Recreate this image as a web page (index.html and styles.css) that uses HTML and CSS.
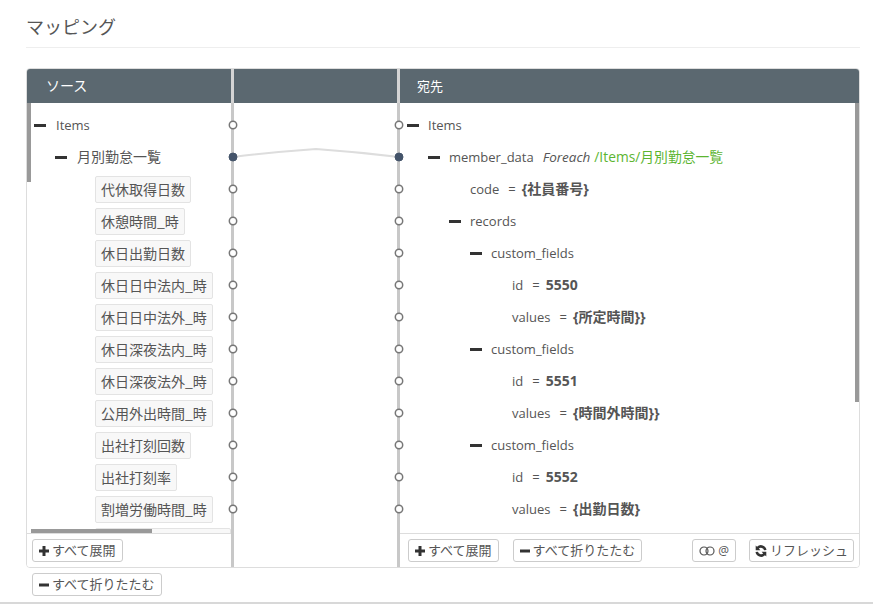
FILE: index.html
```html
<!DOCTYPE html>
<html lang="ja">
<head>
<meta charset="utf-8">
<title>マッピング</title>
<link rel="stylesheet" href="styles.css">
</head>
<body>
<main class="page">
  <h1 class="title">マッピング</h1>
  <section class="panel">
    <div class="panel-head">
      <div class="head-source">ソース</div>
      <div class="head-mid"></div>
      <div class="head-target">宛先</div>
    </div>
    <div class="panel-body">
      <div class="pane pane-source">
        <div class="tree tree-source">
          <div class="row"><i class="toggle"></i><span>Items</span></div>
          <div class="row l1"><i class="toggle"></i><span class="jp">月別勤怠一覧</span></div>
          <div class="row chip-row"><span class="chip">代休取得日数</span></div>
          <div class="row chip-row"><span class="chip">休憩時間_時</span></div>
          <div class="row chip-row"><span class="chip">休日出勤日数</span></div>
          <div class="row chip-row"><span class="chip">休日日中法内_時</span></div>
          <div class="row chip-row"><span class="chip">休日日中法外_時</span></div>
          <div class="row chip-row"><span class="chip">休日深夜法内_時</span></div>
          <div class="row chip-row"><span class="chip">休日深夜法外_時</span></div>
          <div class="row chip-row"><span class="chip">公用外出時間_時</span></div>
          <div class="row chip-row"><span class="chip">出社打刻回数</span></div>
          <div class="row chip-row"><span class="chip">出社打刻率</span></div>
          <div class="row chip-row"><span class="chip">割増労働時間_時</span></div>
          <div class="row chip-row"><span class="chip chip-cut"></span></div>
          <div class="thumb thumb-v-source"></div>
          <div class="thumb thumb-h-source"></div>
        </div>
        <div class="pane-foot">
          <button class="btn"><svg class="ico" viewBox="0 0 12 12"><path d="M4.500 1h3v3.500h3.500v3h-3.500v3.500h-3v-3.500h-3.500v-3h3.500z"/></svg>すべて展開</button>
        </div>
      </div>
      <svg class="wires" viewBox="0 0 169 464">
        <path class="wire" d="M2 54 Q43 49 85 46 Q127 49 168 54"/>
        <g class="dots">
          <circle cx="2" cy="22" r="3.700"/><circle cx="2" cy="86" r="3.700"/><circle cx="2" cy="118" r="3.700"/><circle cx="2" cy="150" r="3.700"/><circle cx="2" cy="182" r="3.700"/><circle cx="2" cy="214" r="3.700"/><circle cx="2" cy="246" r="3.700"/><circle cx="2" cy="278" r="3.700"/><circle cx="2" cy="310" r="3.700"/><circle cx="2" cy="342" r="3.700"/><circle cx="2" cy="374" r="3.700"/><circle cx="2" cy="406" r="3.700"/>
          <circle cx="168" cy="22" r="3.700"/><circle cx="168" cy="86" r="3.700"/><circle cx="168" cy="118" r="3.700"/><circle cx="168" cy="150" r="3.700"/><circle cx="168" cy="182" r="3.700"/><circle cx="168" cy="214" r="3.700"/><circle cx="168" cy="246" r="3.700"/><circle cx="168" cy="278" r="3.700"/><circle cx="168" cy="310" r="3.700"/><circle cx="168" cy="342" r="3.700"/><circle cx="168" cy="374" r="3.700"/><circle cx="168" cy="406" r="3.700"/>
        </g>
        <circle class="on" cx="2" cy="54" r="4"/>
        <circle class="on" cx="168" cy="54" r="4"/>
      </svg>
      <div class="pane pane-target">
        <div class="tree tree-target">
          <div class="row"><i class="toggle"></i><span>Items</span></div>
          <div class="row l1"><i class="toggle"></i><span>member_data</span><em class="foreach">Foreach</em><span class="path">/Items/月別勤怠一覧</span></div>
          <div class="row l2"><i class="spacer"></i><span>code</span><span class="eq">=</span><b>{社員番号}</b></div>
          <div class="row l2"><i class="toggle"></i><span>records</span></div>
          <div class="row l3"><i class="toggle"></i><span>custom_fields</span></div>
          <div class="row l4"><i class="spacer"></i><span>id</span><span class="eq">=</span><b>5550</b></div>
          <div class="row l4"><i class="spacer"></i><span>values</span><span class="eq">=</span><b>{所定時間}}</b></div>
          <div class="row l3"><i class="toggle"></i><span>custom_fields</span></div>
          <div class="row l4"><i class="spacer"></i><span>id</span><span class="eq">=</span><b>5551</b></div>
          <div class="row l4"><i class="spacer"></i><span>values</span><span class="eq">=</span><b>{時間外時間}}</b></div>
          <div class="row l3"><i class="toggle"></i><span>custom_fields</span></div>
          <div class="row l4"><i class="spacer"></i><span>id</span><span class="eq">=</span><b>5552</b></div>
          <div class="row l4"><i class="spacer"></i><span>values</span><span class="eq">=</span><b>{出勤日数}</b></div>
          <div class="thumb thumb-v-target"></div>
        </div>
        <div class="pane-foot foot-target">
          <button class="btn"><svg class="ico" viewBox="0 0 12 12"><path d="M4.500 1h3v3.500h3.500v3h-3.500v3.500h-3v-3.500h-3.500v-3h3.500z"/></svg>すべて展開</button>
          <button class="btn"><svg class="ico" viewBox="0 0 12 12"><path d="M1 4.500h10v3h-10z"/></svg>すべて折りたたむ</button>
          <button class="btn btn-at"><svg class="rings" viewBox="0 0 16 10"><circle cx="5" cy="5" r="4"/><circle cx="11" cy="5" r="4"/></svg>@</button>
          <button class="btn btn-refresh"><svg class="ico" viewBox="0 0 12 12"><path d="M11.500 5A5.600 5.600 0 0 0 2 1.800L.7.500V5.200H5.400L3.800 3.600A3.200 3.200 0 0 1 9 5.300zM.5 7A5.600 5.600 0 0 0 10 10.200L11.300 11.500V6.800H6.600L8.200 8.400A3.200 3.200 0 0 1 3 6.700z"/></svg>リフレッシュ</button>
        </div>
      </div>
    </div>
  </section>
  <div class="below">
    <button class="btn"><svg class="ico" viewBox="0 0 12 12"><path d="M1 4.500h10v3h-10z"/></svg>すべて折りたたむ</button>
  </div>
</main>
<div class="bottom-rule"></div>
</body>
</html>
```
FILE: styles.css
```css
* { box-sizing: border-box; }
html, body { margin: 0; height: 100%; background: #fff; overflow: hidden; }
body {
  font-family: "Open Sans", "Noto Sans CJK JP", sans-serif;
  font-size: 13px;
  color: #555;
}
.page { padding: 0 13px 0 26px; height: 602px; }
.title {
  margin: 0 0 20px;
  height: 48px;
  padding-top: 14px;
  border-bottom: 1px solid #eee;
  font-size: 18px;
  line-height: 26px;
  font-weight: 400;
  color: #555;
}
.panel {
  height: 500px;
  border: 1px solid #ddd;
  border-radius: 4px;
  display: flex;
  flex-direction: column;
  overflow: hidden;
}
.panel-head {
  flex: none;
  height: 34px;
  background: #5b6870;
  color: #fff;
  display: grid;
  grid-template-columns: 204px 3px 163px 3px 1fr;
  line-height: 34px;
  font-size: 13px;
}
.head-source { grid-column: 1; padding-left: 19px; font-size: 14px; }
.head-mid {
  grid-column: 2 / 5;
  border-left: 3px solid #d4d4d4;
  border-right: 3px solid #d4d4d4;
}
.head-target { grid-column: 5; padding-left: 17px; }
.panel-body {
  flex: 1;
  min-height: 0;
  display: grid;
  grid-template-columns: 204px 169px 1fr;
}
.pane { display: flex; flex-direction: column; min-width: 0; position: relative; overflow: hidden; }
.tree { flex: 1; min-height: 0; position: relative; padding: 6px 0 0 7px; overflow: hidden; }
.row {
  height: 32px;
  display: flex;
  align-items: center;
  white-space: nowrap;
}
.row > span, .row > b, .row > em { line-height: 18px; }
.jp { font-size: 14px; }
.l1 { padding-left: 21px; }
.l2 { padding-left: 42px; }
.l3 { padding-left: 63px; }
.l4 { padding-left: 84px; }
.toggle, .spacer { flex: none; width: 21px; height: 3px; display: block; }
.toggle { background: linear-gradient(#333, #333) 0 0 / 12px 3px no-repeat; }
.tree-source .toggle { width: 22px; }
.chip-row { padding-left: 61px; }
.row > .chip {
  height: 27px;
  line-height: 25px;
  padding: 0 5px;
  border: 1px solid #e3e3e3;
  border-radius: 2px;
  background: #f8f8f8;
  font-family: "Noto Sans CJK JP", sans-serif;
  font-size: 14px;
}
.row > .chip-cut { width: 136px; }
.eq { margin: 0 6px 0 9px; }
.row b { font-weight: 700; font-size: 14px; color: #555; }
.foreach { margin-left: 9px; font-size: 13.500px; }
.path { margin-left: 4px; font-size: 13.800px; color: #5cb531; }
.pane-foot {
  flex: none;
  height: 34px;
  border-top: 1px solid #ddd;
  background: #fff;
  display: flex;
  align-items: center;
  gap: 14px;
  padding: 0 5px;
}
.foot-target { padding-left: 8px; }
.btn {
  height: 23px;
  padding: 0 6px 0 5px;
  font: inherit;
  font-size: 13px;
  line-height: 21px;
  color: #555;
  background: #fff;
  border: 1px solid #ccc;
  border-radius: 3px;
  display: inline-flex;
  align-items: center;
  gap: 2px;
  white-space: nowrap;
}
.ico { width: 12px; height: 12px; fill: #333; flex: none; }
.rings { width: 16px; height: 10px; fill: none; stroke: #555; stroke-width: 1.200; flex: none; }
.btn-at { margin-left: auto; gap: 3px; font-size: 12px; padding: 0 6px; }
.btn-refresh { gap: 3px; margin-left: -1px; padding-right: 5px; }
.thumb { position: absolute; background: #999; }
.thumb-v-source { left: 0; top: 0; width: 4px; height: 79px; }
.thumb-h-source { left: 4px; bottom: 0; width: 121px; height: 4px; }
.thumb-v-target { right: 0; top: 0; width: 4px; height: 299px; }
.wires {
  display: block;
  width: 169px;
  height: 464px;
  overflow: visible;
  position: relative;
  z-index: 1;
  background:
    linear-gradient(#c8c8c8, #c8c8c8) 0 0 / 3px 100% no-repeat,
    linear-gradient(#c8c8c8, #c8c8c8) 100% 0 / 3px 100% no-repeat;
}
.wire { fill: none; stroke: #ddd; stroke-width: 2; }
.dots circle { fill: #fff; stroke: #777; stroke-width: 1.500; }
.on { fill: #44546a; stroke: #44546a; }
.below { padding: 5px 0 0 6px; }
.bottom-rule { height: 2px; background: #d8d8d8; }
```
